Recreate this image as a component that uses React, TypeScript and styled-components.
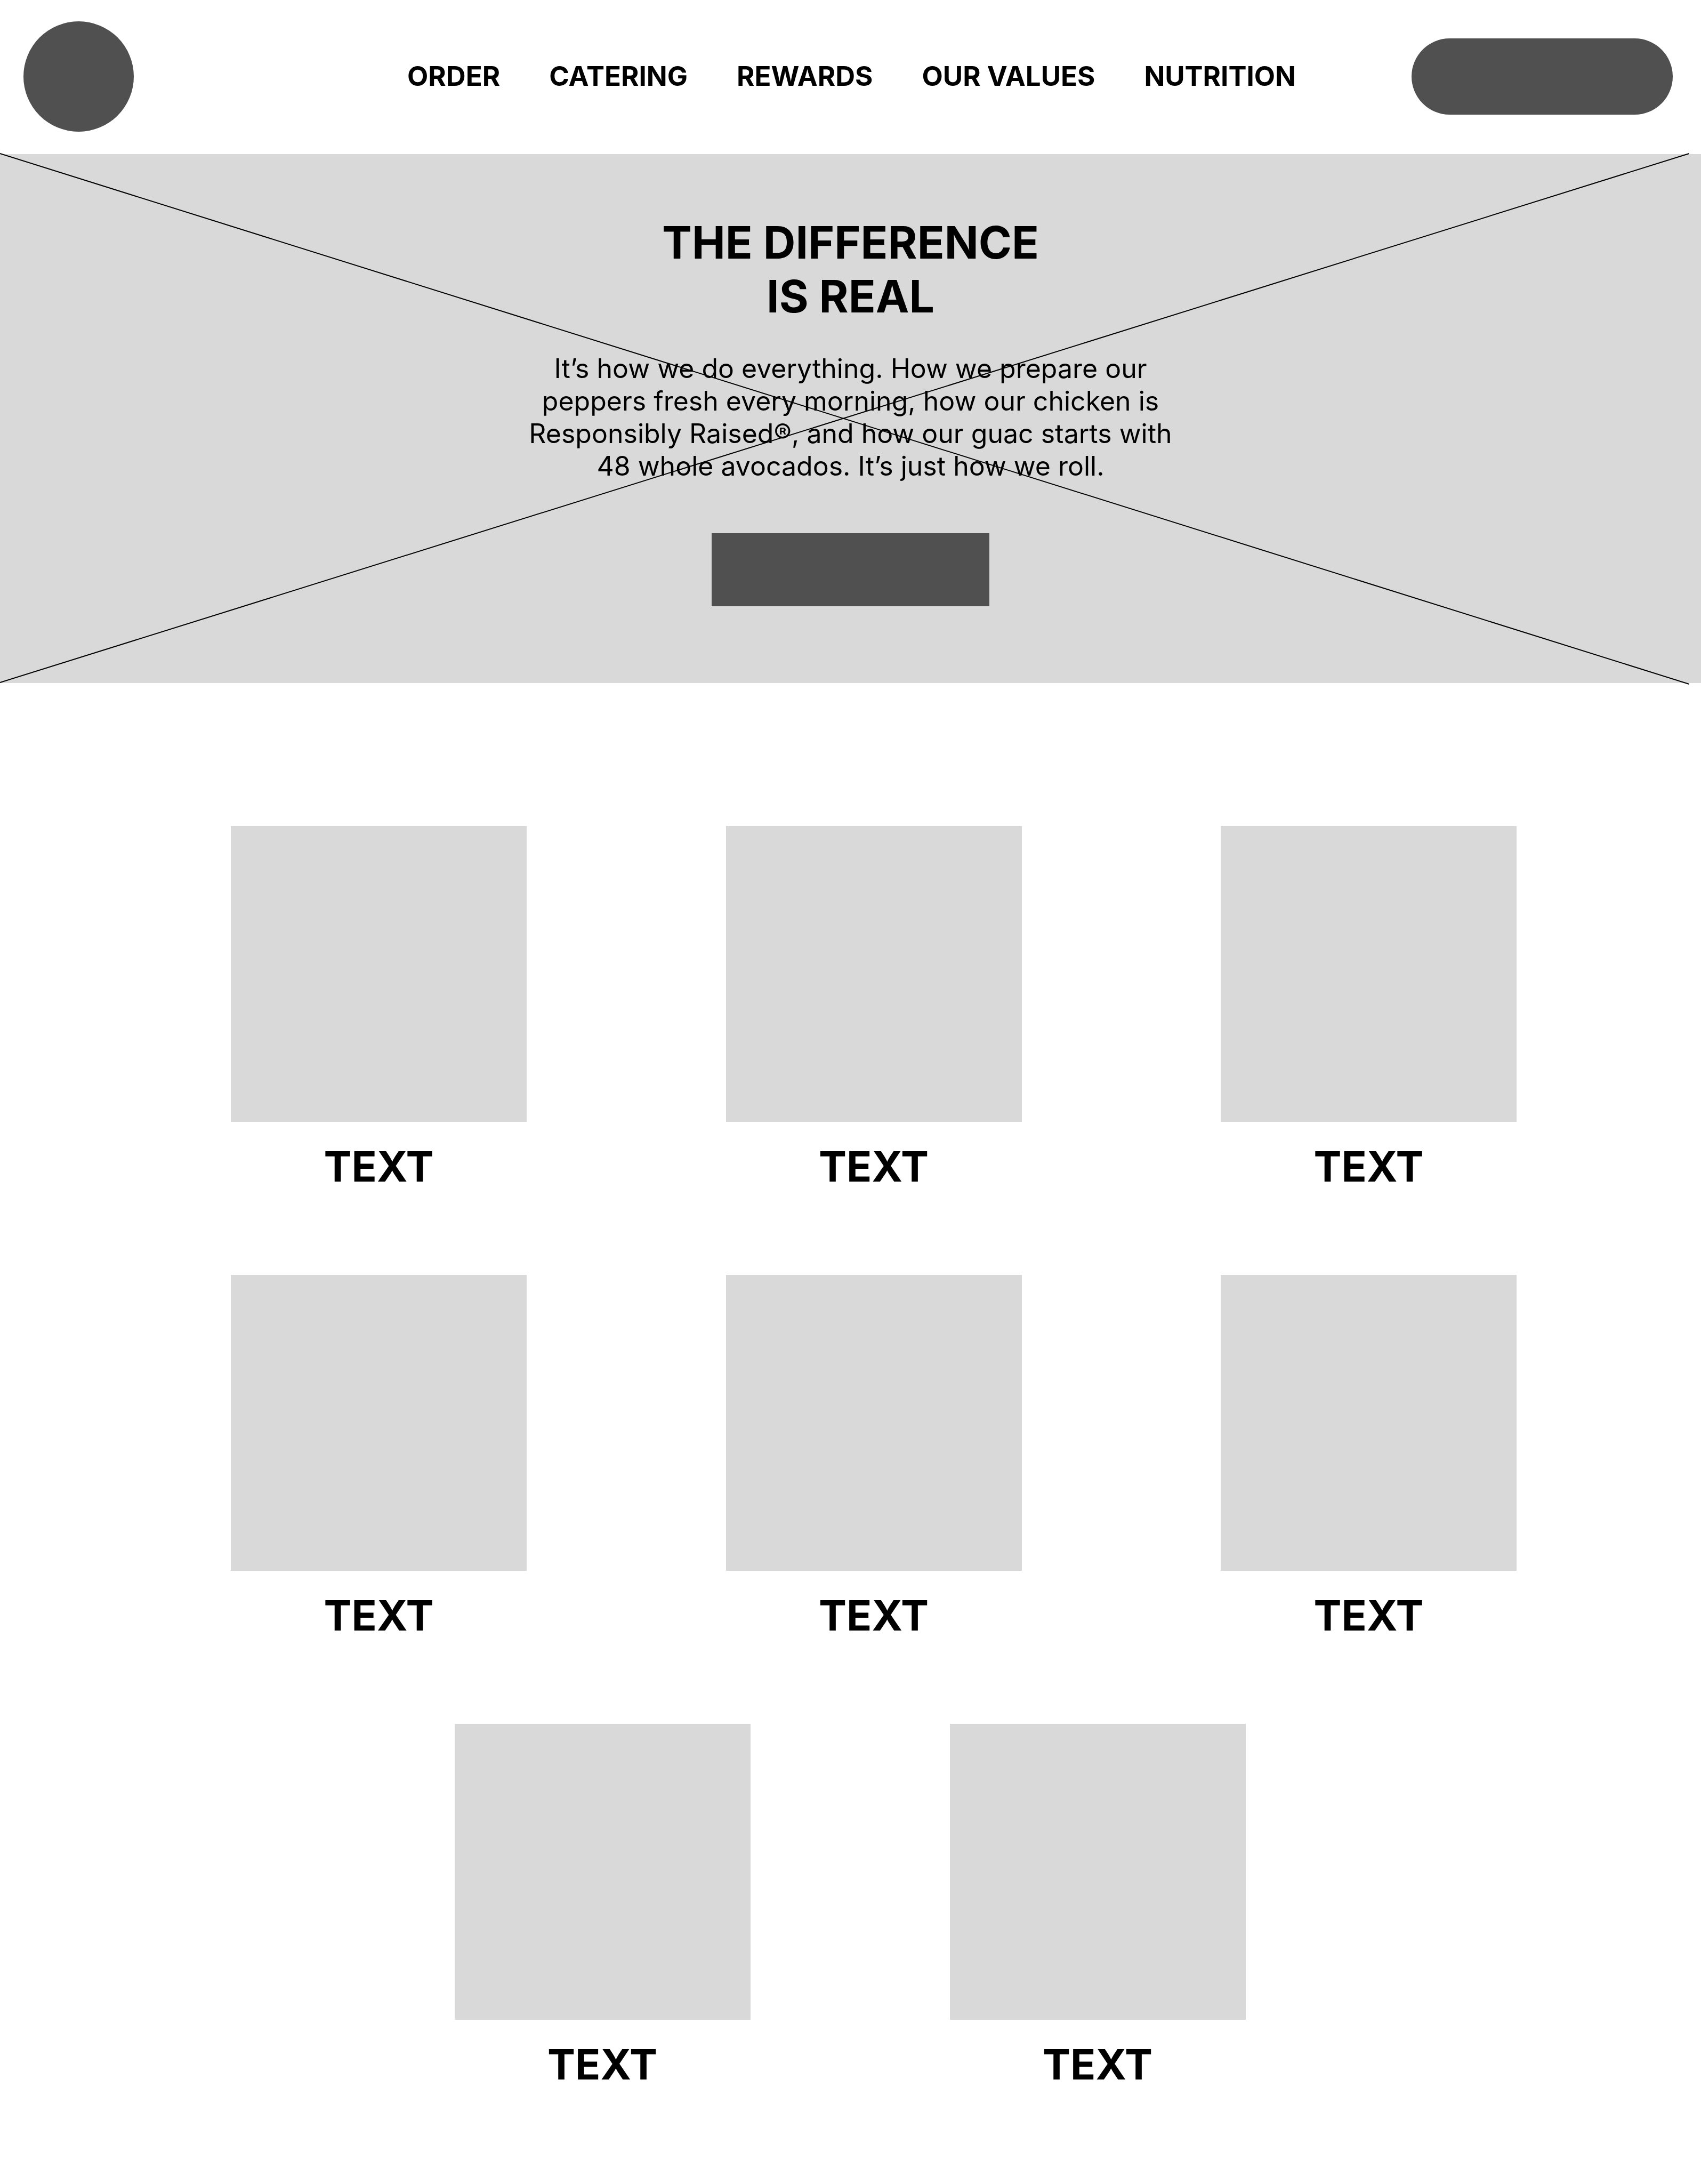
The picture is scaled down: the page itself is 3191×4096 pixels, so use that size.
import React from "react";
import styled, { createGlobalStyle } from "styled-components";

const GlobalStyle = createGlobalStyle`
  *, *::before, *::after { box-sizing: border-box; }
  body {
    margin: 0;
    background: #ffffff;
    color: #000000;
    font-family: Inter, "Liberation Sans", sans-serif;
  }
`;

const Header = styled.header`
  display: grid;
  grid-template-columns: 1fr auto 1fr;
  align-items: center;
  padding: 40px 44px 42px;
`;

const Logo = styled.a`
  display: block;
  width: 207px;
  height: 207px;
  border-radius: 50%;
  background: #505050;
`;

const Nav = styled.nav`
  display: flex;
  gap: 92px;
  padding: 0 0 2px 4px;
`;

const NavLink = styled.a`
  color: inherit;
  font-size: 51px;
  font-weight: 700;
  line-height: 61px;
  text-decoration: none;
  white-space: nowrap;
`;

const Button = styled.button`
  display: block;
  width: 521px;
  height: 137px;
  padding: 0;
  border: 0;
  background: #505050;
`;

const PillButton = styled(Button)`
  justify-self: end;
  width: 490px;
  height: 143px;
  margin-right: 9px;
  border-radius: 72px;
`;

const Hero = styled.section`
  position: relative;
  display: flex;
  flex-direction: column;
  align-items: center;
  padding: 115px 44px 144px;
  background: #d9d9d9;
  text-align: center;
`;

const Cross = styled.svg`
  position: absolute;
  inset: 0;
  width: 100%;
  height: 100%;
  overflow: visible;
  pointer-events: none;
`;

const Title = styled.h1`
  margin: 0;
  font-size: 84px;
  font-weight: 700;
  line-height: 101px;
`;

const Lead = styled.p`
  margin: 55px 0 95px;
  max-width: 1240px;
  font-size: 50px;
  line-height: 61px;
`;

const Main = styled.main`
  display: flex;
  flex-direction: column;
  gap: 157px;
  padding: 268px 0 178px;
`;

const Row = styled.div<{ $centered?: boolean }>`
  display: flex;
  justify-content: ${({ $centered }) => ($centered ? "center" : "space-between")};
  gap: ${({ $centered }) => ($centered ? 374 : 0)}px;
  padding: ${({ $centered }) => ($centered ? "0 2px 0 0" : "0 346px 0 433px")};
`;

const Card = styled.figure`
  display: flex;
  flex-direction: column;
  gap: 38px;
  width: 555px;
  margin: 0;
`;

const Picture = styled.div`
  aspect-ratio: 1;
  background: #d9d9d9;
`;

const Caption = styled.figcaption`
  font-size: 78px;
  font-weight: 700;
  line-height: 92px;
  text-align: center;
`;

const links = ["ORDER", "CATERING", "REWARDS", "OUR VALUES", "NUTRITION"];

const rows = [
  ["TEXT", "TEXT", "TEXT"],
  ["TEXT", "TEXT", "TEXT"],
  ["TEXT", "TEXT"],
];

export default function App() {
  return (
    <>
      <GlobalStyle />
      <Header>
        <Logo href="#" aria-label="Home" />
        <Nav>
          {links.map((label) => (
            <NavLink key={label} href="#">
              {label}
            </NavLink>
          ))}
        </Nav>
        <PillButton type="button" aria-label="Account" />
      </Header>
      <Hero>
        <Title>
          THE DIFFERENCE
          <br />
          IS REAL
        </Title>
        <Lead>
          It’s how we do everything. How we prepare our peppers fresh every
          morning, how our chicken is Responsibly Raised®, and how our guac
          starts with 48 whole avocados. It’s just how we roll.
        </Lead>
        <Button type="button" aria-label="Learn more" />
        <Cross aria-hidden="true" stroke="#000000" strokeWidth="2">
          <line x1="0" y1="-0.1%" x2="99.3%" y2="100.2%" />
          <line x1="0" y1="99.9%" x2="99.3%" y2="-0.1%" />
        </Cross>
      </Hero>
      <Main>
        {rows.map((captions, r) => (
          <Row key={r} $centered={captions.length < 3}>
            {captions.map((caption, c) => (
              <Card key={c}>
                <Picture />
                <Caption>{caption}</Caption>
              </Card>
            ))}
          </Row>
        ))}
      </Main>
    </>
  );
}
